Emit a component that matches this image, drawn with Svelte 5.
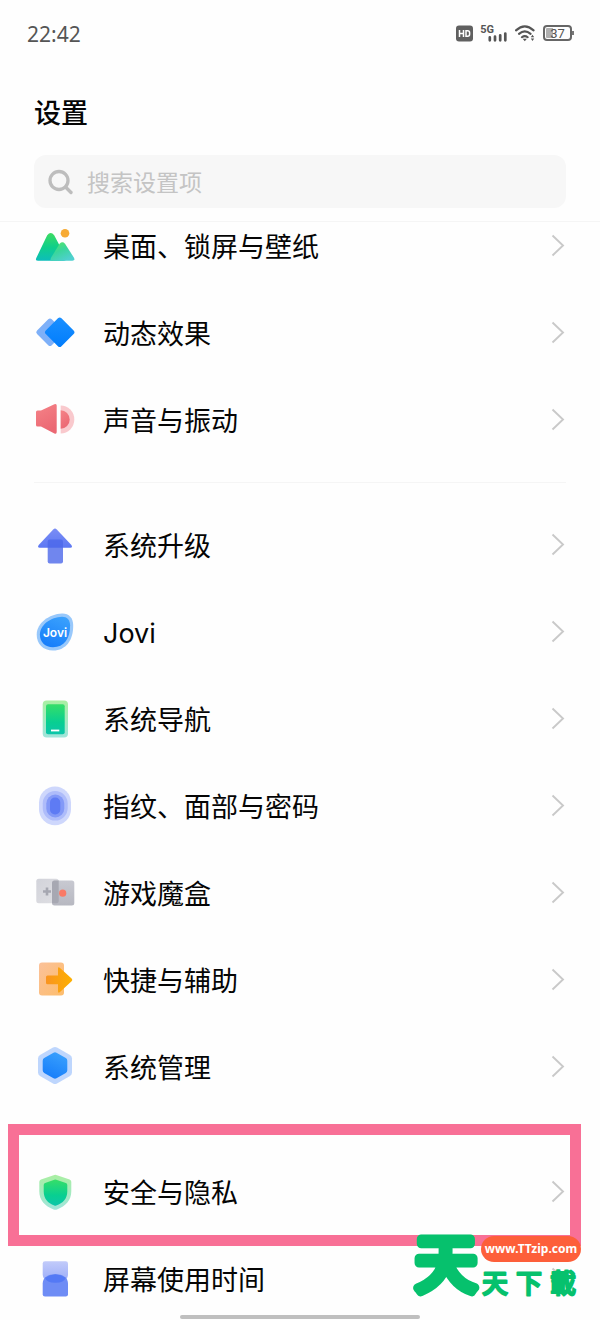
<script>
  const groups = [
    [
      { icon: 'wallpaper', label: '桌面、锁屏与壁纸' },
      { icon: 'motion', label: '动态效果' },
      { icon: 'sound', label: '声音与振动' },
    ],
    [
      { icon: 'upgrade', label: '系统升级' },
      { icon: 'jovi', label: 'Jovi' },
      { icon: 'navigation', label: '系统导航' },
      { icon: 'fingerprint', label: '指纹、面部与密码' },
      { icon: 'game', label: '游戏魔盒' },
      { icon: 'shortcut', label: '快捷与辅助' },
      { icon: 'system', label: '系统管理' },
    ],
    [
      { icon: 'security', label: '安全与隐私' },
      { icon: 'screentime', label: '屏幕使用时间' },
    ],
  ];
</script>

<div class="screen">
  <header>
    <div class="status">
      <time>22:42</time>
      <div class="indicators">
        <svg width="17" height="17" viewBox="0 0 17 17" aria-hidden="true">
          <rect width="17" height="16" y="0.5" rx="3" fill="#606060" />
          <path d="M3.5 5v7M7.5 5v7M3.5 8.5h4M10 5.700h1.600q2 0 2 2v1.600q0 2-2 2H10z" fill="none" stroke="#fff" stroke-width="1.500" />
        </svg>
        <div class="cell">
          <span>5G</span>
          <svg width="19" height="10" viewBox="0 0 19 10" aria-hidden="true">
            <path d="M1.800 8.300V5.400M7 8.300V4.700M12.200 8.300V3.300M17.300 8.300V1.500" stroke="#555" stroke-width="2.700" stroke-linecap="round" />
          </svg>
        </div>
        <svg width="20" height="17" viewBox="0 0 20 17" aria-hidden="true">
          <path d="M1 5.400Q9.800-2.600 18.600 5.400M4 8.900q5.800-5 11.600 0M6.900 12.200q2.900-2.300 5.800 0" fill="none" stroke="#555" stroke-width="2.100" stroke-linecap="round" />
          <path d="M7.700 13.700h4.200L9.800 16.200zM15.800 12.200l1.700-2.400 1.700 2.400zM15.800 13.500l1.700 2.400 1.700-2.400z" fill="#555" />
        </svg>
        <div class="battery">
          <span>37</span>
        </div>
      </div>
    </div>
    <h1>设置</h1>
    <label class="search">
      <svg width="26" height="26" viewBox="0 0 26 26" fill="none" stroke="#bdbdbd" aria-hidden="true">
        <circle cx="11" cy="11.500" r="9" stroke-width="3.300" />
        <path d="M17.500 18l5.500 5.500" stroke-width="3.400" stroke-linecap="round" />
      </svg>
      <input type="search" placeholder="搜索设置项" aria-label="搜索设置项" />
    </label>
  </header>

  <main>
    <div class="list">
      {#each groups as group}
        <ul>
          {#each group as item}
            <li>
              <button type="button">
                <svg class="icon" viewBox="0 0 40 40" aria-hidden="true">
                  {#if item.icon === 'wallpaper'}
                    <path d="M12.200 9.200q3.500-4.400 7 0L31 31.800q1 3-2 3H3.200q-3.400 0-1.800-3z" fill="url(#hill)" />
                    <path d="M24.600 17.700q2.800-2.700 5.400 0l9 14.100q1.200 3-1.600 3H17q-2.200 0-1-3z" fill="url(#hill2)" />
                    <circle cx="30" cy="7.200" r="4.300" fill="#f7ab35" />
                  {:else if item.icon === 'motion'}
                    <rect x="4.600" y="8.800" width="20.800" height="20.800" rx="2.500" fill="#7eb0f8" transform="rotate(45 15 19.200)" />
                    <rect x="13.600" y="8.100" width="22.200" height="22.200" rx="2.500" fill="url(#blue)" transform="rotate(45 24.700 19.200)" />
                  {:else if item.icon === 'sound'}
                    <path d="M2.500 10.500H6L19.400 4.200q2.300-1 2.300 1.300v26.600q0 2.300-2.300 1.300L6 26.500H2.500Q1 26.500 1 25V12q0-1.500 1.500-1.500z" fill="url(#red)" />
                    <path d="M25.700 5.500a13.600 14 0 0 1 0 28z" fill="#f9c9cd" />
                    <path d="M25.700 10.200a9 9.300 0 0 1 0 18.600z" fill="url(#red)" />
                  {:else if item.icon === 'upgrade'}
                    <path d="M18.200 4.500q1.800-1.800 3.600 0L36.400 20q1.600 2.800-1 2.800H4.700Q2 22.800 3.700 20z" fill="url(#violet)" />
                    <rect x="12.700" y="14.500" width="15.300" height="24" rx="2" fill="#4c68ea" opacity=".8" />
                  {:else if item.icon === 'jovi'}
                    <path d="M27 1.600C34 1.400 38 6 38.200 13 38.500 28 31 38.500 18 38.500 8 38.500 1.700 32 1.700 22.500 1.700 11.500 14 2 27 1.600z" fill="#98c8fb" />
                    <path d="M27 4.800c5.200 0 8 3.300 8.100 8.500.2 13-6.100 22-17.100 22-8 0-13.100-5.300-13.100-12.800C4.900 13 16 5 27 4.800z" fill="url(#jovi)" />
                    <text x="20" y="25" text-anchor="middle">Jovi</text>
                  {:else if item.icon === 'navigation'}
                    <rect x="7.700" y="1.500" width="25.300" height="37" rx="4" fill="url(#mint)" />
                    <rect x="11" y="5.200" width="18.700" height="30" rx="2" fill="url(#green)" />
                    <path d="M16 31.500h8.300" stroke="#fff" stroke-width="1.800" />
                  {:else if item.icon === 'fingerprint'}
                    <rect x="4" y=".5" width="32" height="38.700" rx="16" fill="#ced7fc" />
                    <rect x="7.700" y="5" width="25" height="29.600" rx="12.500" fill="#aebcfa" />
                    <rect x="11.300" y="8.500" width="18" height="23" rx="9" fill="#8399f7" />
                    <rect x="15" y="11.500" width="10.300" height="17" rx="5" fill="#5e7bf4" />
                  {:else if item.icon === 'game'}
                    <rect x="1.300" y="5.800" width="22.400" height="24.400" rx="2.500" fill="url(#silver)" />
                    <rect x="17" y="7.500" width="22.300" height="25" rx="2.500" fill="url(#silver2)" />
                    <path d="M17 10q0-2.500 2.500-2.500h4.200v20.200q0 2.500-2.500 2.500H17z" fill="#a7a8b2" />
                    <path d="M12 14.500v8M8 18.500h8" stroke="#a6a7b1" stroke-width="2.600" />
                    <circle cx="27.700" cy="20.200" r="3.600" fill="#f97a66" />
                  {:else if item.icon === 'shortcut'}
                    <rect x="4" y="2.500" width="25" height="33" rx="3" fill="url(#peach)" />
                    <path d="M12.500 15.500H23V8.700q0-2.500 2-.8l11.600 10.500q1.500 1.400 0 2.800L25 32q-2 1.700-2-.8v-7H12.500q-1.500 0-1.500-1.500V17q0-1.500 1.500-1.500z" fill="url(#orange)" />
                  {:else if item.icon === 'system'}
                    <path d="M18 .6q2-1.100 4 0l13 7.500q2 1.200 2 3.400v14q0 2.200-2 3.400L22 36.400q-2 1.100-4 0L5 28.900q-2-1.200-2-3.400v-14q0-2.200 2-3.400z" fill="#bed6fd" />
                    <path d="M18.500 5.700q1.500-.9 3 0l9.300 5.400q1.500.9 1.500 2.600v9.600q0 1.700-1.500 2.600l-9.300 5.400q-1.500.9-3 0l-9.300-5.400q-1.500-.9-1.500-2.600v-9.600q0-1.700 1.500-2.600z" fill="url(#jovi)" />
                  {:else if item.icon === 'security'}
                    <path d="M18.600 3.200q1.700-.7 3.400 0l12.600 4.200q1.700.6 1.700 2.400v9.400c0 9-5.500 14.800-14.300 18.200q-1.700.6-3.400 0C9.800 34 4.300 28.200 4.300 19.200V9.800q0-1.800 1.700-2.400z" fill="url(#mint)" />
                    <path d="M19.300 7.800q1-.4 2 0l9.600 3.300q1.400.5 1.400 2v6.400c0 7.100-4.300 11.600-11 14.100q-1 .4-2 0c-6.500-2.500-10.600-7-10.600-14.100v-6.400q0-1.500 1.400-2z" fill="url(#green)" />
                  {:else}
                    <path d="M10 2.200h20.700q2.300 0 2.300 2.300v10.700c0 5.500-5 8.600-12.600 8.600S7.700 20.700 7.700 15.200V4.500q0-2.300 2.300-2.300z" fill="url(#lilac)" />
                    <path d="M10 37.500h20.700q2.300 0 2.300-2.300V24.500c0-6-5-9.300-12.600-9.300S7.700 18.500 7.700 24.500v10.700q0 2.300 2.300 2.300z" fill="#6e8cf5" />
                    <path d="M10 18.700q10.300-7 20.800 0-1.500 5.100-10.400 5.100T10 18.700z" fill="#5479f5" />
                  {/if}
                </svg>
                <span class="label">{item.label}</span>
                <svg class="chevron" viewBox="0 0 14 24" aria-hidden="true">
                  <path d="M1.500 1.500L12 11.500 1.500 21.500" fill="none" stroke="#c9c9c9" stroke-width="1.900" />
                </svg>
              </button>
            </li>
          {/each}
        </ul>
      {/each}
    </div>
  </main>

  <div class="highlight"></div>
  <div class="home"></div>

  <div class="brand">
    <svg class="big" viewBox="0 0 70 70">
      <text x="35" y="57" text-anchor="middle">天</text>
    </svg>
    <div class="side">
      <span class="url">www.TTzip.com</span>
      <svg class="name" viewBox="0 0 98 32">
        <text y="25" x="1 35 69">天下載</text>
      </svg>
    </div>
  </div>

  <svg class="defs" aria-hidden="true">
    <defs>
      <linearGradient id="hill" x1="0" y1="0" x2="0" y2="1"><stop stop-color="#3edb62" /><stop offset=".5" stop-color="#10cf89" /><stop offset="1" stop-color="#0dbdbb" /></linearGradient>
      <linearGradient id="hill2" x1="0" y1="0" x2=".6" y2="1"><stop stop-color="#5be85e" /><stop offset=".5" stop-color="#3ad69b" /><stop offset="1" stop-color="#4fd0cf" /></linearGradient>
      <linearGradient id="blue" x1="0" y1="0" x2="1" y2="1"><stop stop-color="#1b90ff" /><stop offset="1" stop-color="#007cfc" /></linearGradient>
      <linearGradient id="red" x1="0" y1="0" x2=".4" y2="1"><stop stop-color="#f58388" /><stop offset="1" stop-color="#eb6873" /></linearGradient>
      <linearGradient id="violet" x1="0" y1="0" x2="0" y2="1"><stop stop-color="#7a8df5" /><stop offset="1" stop-color="#5d78f3" /></linearGradient>
      <linearGradient id="jovi" x1=".7" y1="0" x2=".3" y2="1"><stop stop-color="#39a0fd" /><stop offset="1" stop-color="#167dfa" /></linearGradient>
      <linearGradient id="mint" x1="0" y1="0" x2="0" y2="1"><stop stop-color="#a9efa2" /><stop offset="1" stop-color="#a0e5db" /></linearGradient>
      <linearGradient id="green" x1="0" y1="0" x2="0" y2="1"><stop stop-color="#36de68" /><stop offset=".6" stop-color="#08cf91" /><stop offset="1" stop-color="#0cc5aa" /></linearGradient>
      <linearGradient id="silver" x1="0" y1="0" x2="1" y2="1"><stop stop-color="#d2d3da" /><stop offset="1" stop-color="#dfdfe3" /></linearGradient>
      <linearGradient id="silver2" x1="0" y1="0" x2="0" y2="1"><stop stop-color="#c8c9d1" /><stop offset="1" stop-color="#b7b8c1" /></linearGradient>
      <linearGradient id="peach" x1="0" y1="0" x2="1" y2="1"><stop stop-color="#fbc199" /><stop offset="1" stop-color="#fdbd6c" /></linearGradient>
      <linearGradient id="orange" x1="0" y1="0" x2="1" y2="0"><stop stop-color="#f99420" /><stop offset="1" stop-color="#fdb000" /></linearGradient>
      <linearGradient id="lilac" x1="0" y1="0" x2="0" y2="1"><stop stop-color="#c2cbfa" /><stop offset="1" stop-color="#98aaf8" /></linearGradient>
    </defs>
  </svg>
</div>

<style>
  :global(body) {
    margin: 0;
    background: #fff;
  }

  .screen {
    position: relative;
    display: flex;
    flex-direction: column;
    height: 100vh;
    overflow: hidden;
    background: #fefefe;
    color: #050505;
    font-family: Inter, "Noto Sans CJK SC", sans-serif;
  }

  header {
    display: flex;
    flex-direction: column;
    padding: 0 34px 13px;
    border-bottom: 1px solid #f5f5f5;
  }

  .status {
    display: flex;
    align-items: center;
    justify-content: space-between;
    height: 66px;
    margin: 0 -8px 0 -7px;
    color: #555;
    font-family: Roboto, sans-serif;
  }

  time {
    font-family: "Noto Sans", sans-serif;
    font-size: 21px;
    line-height: 24px;
    padding-top: 2px;
  }

  .indicators {
    display: flex;
    align-items: center;
    gap: 8px;
  }

  .cell {
    display: flex;
    align-items: flex-end;
    height: 17px;
    margin-left: -1px;
  }

  .cell span {
    align-self: flex-start;
    margin-right: -6px;
    font-size: 11px;
    font-weight: 700;
    line-height: 9px;
  }

  .battery {
    position: relative;
    box-sizing: border-box;
    width: 29px;
    height: 16px;
    margin-right: 2px;
    border: 2px solid #666;
    border-radius: 4px;
    background: linear-gradient(90deg, #b0b0b0 7px, transparent 7px) content-box;
    padding: 1px;
    text-align: center;
  }

  .battery::after {
    content: '';
    position: absolute;
    top: 4px;
    right: -4px;
    width: 2px;
    height: 4px;
    background: #777;
  }

  .battery span {
    display: block;
    font-size: 13px;
    line-height: 11px;
  }

  h1 {
    margin: 28px 0 21px;
    font-size: 27px;
    font-weight: 500;
    line-height: 40px;
  }

  .search {
    display: flex;
    align-items: center;
    gap: 13px;
    height: 53px;
    padding: 0 14px;
    border-radius: 12px;
    background: #f7f7f7;
  }

  .search svg {
    flex: none;
  }

  input {
    flex: 1;
    min-width: 0;
    padding: 3px 0 0;
    border: 0;
    outline: 0;
    background: none;
    font: inherit;
    font-size: 23px;
    line-height: 34px;
  }

  input::placeholder {
    color: #c4c4c4;
  }

  main {
    flex: 1;
    min-height: 0;
    overflow: hidden;
  }

  .list {
    margin-top: -20px;
  }

  ul {
    margin: 0 34px;
    padding: 0;
    list-style: none;
  }

  ul + ul {
    margin-top: 19px;
    padding-top: 18px;
    border-top: 1px solid #f5f5f5;
  }

  button {
    display: flex;
    align-items: center;
    width: 100%;
    height: 87px;
    padding: 0 1px;
    border: 0;
    background: none;
    color: inherit;
    font: inherit;
    font-size: 27px;
    line-height: 40px;
    text-align: left;
  }

  .icon {
    flex: none;
    width: 40px;
    height: 40px;
  }

  .icon text {
    fill: #fff;
    font-family: Inter, sans-serif;
    font-size: 12px;
    font-weight: 600;
  }

  .label {
    flex: 1;
    margin-left: 28px;
    padding-top: 5px;
  }

  .chevron {
    flex: none;
    width: 14px;
    height: 24px;
  }

  .highlight {
    position: absolute;
    top: 1124px;
    right: 19px;
    left: 8px;
    box-sizing: border-box;
    height: 122px;
    border: 11px solid #f87096;
  }

  .home {
    position: absolute;
    bottom: 1px;
    left: 30%;
    width: 40%;
    height: 4px;
    border-radius: 2px;
    background: #bfbfbf;
  }

  .brand {
    position: absolute;
    right: 19px;
    bottom: 20px;
    display: flex;
    align-items: flex-end;
    color: #06c16d;
    font-family: "Noto Sans CJK TC", sans-serif;
  }

  .brand text {
    fill: #06c16d;
    stroke: #06c16d;
    stroke-linejoin: round;
  }

  .big {
    width: 70px;
    height: 70px;
    overflow: visible;
  }

  .big text {
    font-size: 62px;
    font-weight: 400;
    stroke-width: 9px;
  }

  .side {
    display: flex;
    flex-direction: column;
    gap: 6px;
  }

  .url {
    width: 100px;
    border-radius: 13px;
    background: #fd5f3a;
    color: #fff;
    font-family: "Noto Sans", sans-serif;
    font-size: 12px;
    font-weight: 700;
    line-height: 26px;
    text-align: center;
  }

  .name {
    width: 98px;
    height: 32px;
    overflow: visible;
  }

  .name text {
    font-size: 26px;
    font-weight: 500;
    stroke-width: 2px;
  }

  .defs {
    position: absolute;
    width: 0;
    height: 0;
  }
</style>
